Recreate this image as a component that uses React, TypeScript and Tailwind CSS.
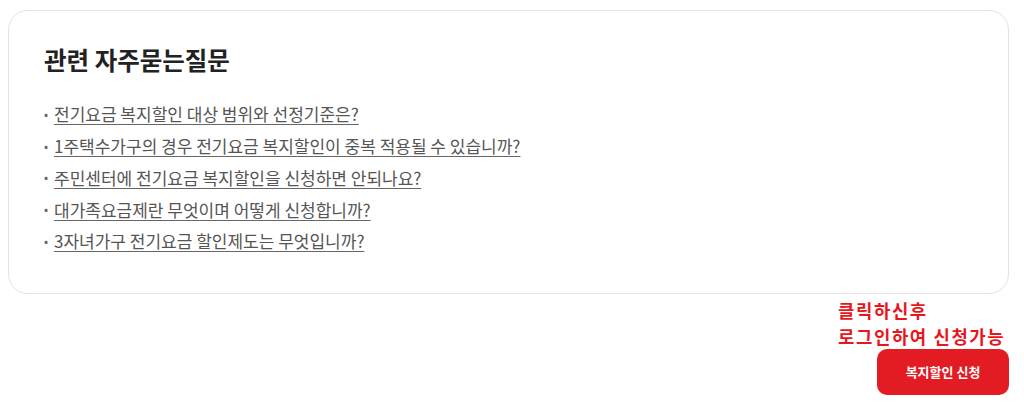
const FAQS = [
  '전기요금 복지할인 대상 범위와 선정기준은?',
  '1주택수가구의 경우 전기요금 복지할인이 중복 적용될 수 있습니까?',
  '주민센터에 전기요금 복지할인을 신청하면 안되나요?',
  '대가족요금제란 무엇이며 어떻게 신청합니까?',
  '3자녀가구 전기요금 할인제도는 무엇입니까?',
];

export default function App() {
  return (
    <div className="w-[1024px] h-[405px] bg-white font-['Noto_Sans_CJK_KR','Noto_Sans',sans-serif] overflow-hidden">
      <div className="pt-[10px] pl-[8px] w-[1009px]">
        <div className="h-[284px] rounded-[20px] border border-[#e3e3e3] pl-[35px] pt-[31px]">
          <h2 className="text-[24.5px] font-bold text-[#222] leading-[36px]">관련 자주묻는질문</h2>
          <ul className="mt-[20px] flex flex-col">
            {FAQS.map((q) => (
              <li key={q} className="flex items-center h-[31.8px] text-[17px] text-[#555]">
                <span className="w-[10px] text-[12px] text-[#666]">•</span>
                <a href="#" className="underline underline-offset-[3px] decoration-[#666]">{q}</a>
              </li>
            ))}
          </ul>
        </div>
      </div>
      <div className="w-[1009px] flex flex-col items-end">
        <div className="mt-[3px] w-[171px] text-[17.8px] font-bold text-[#e8161c] leading-[26px] tracking-[1.6px]">
          <div>클릭하신후</div>
          <div className="whitespace-nowrap">로그인하여 신청가능</div>
        </div>
        <button className="w-[132px] h-[46px] rounded-[10px] bg-[#e31b23] text-white text-[13px] font-bold">
          복지할인 신청
        </button>
      </div>
    </div>
  );
}
